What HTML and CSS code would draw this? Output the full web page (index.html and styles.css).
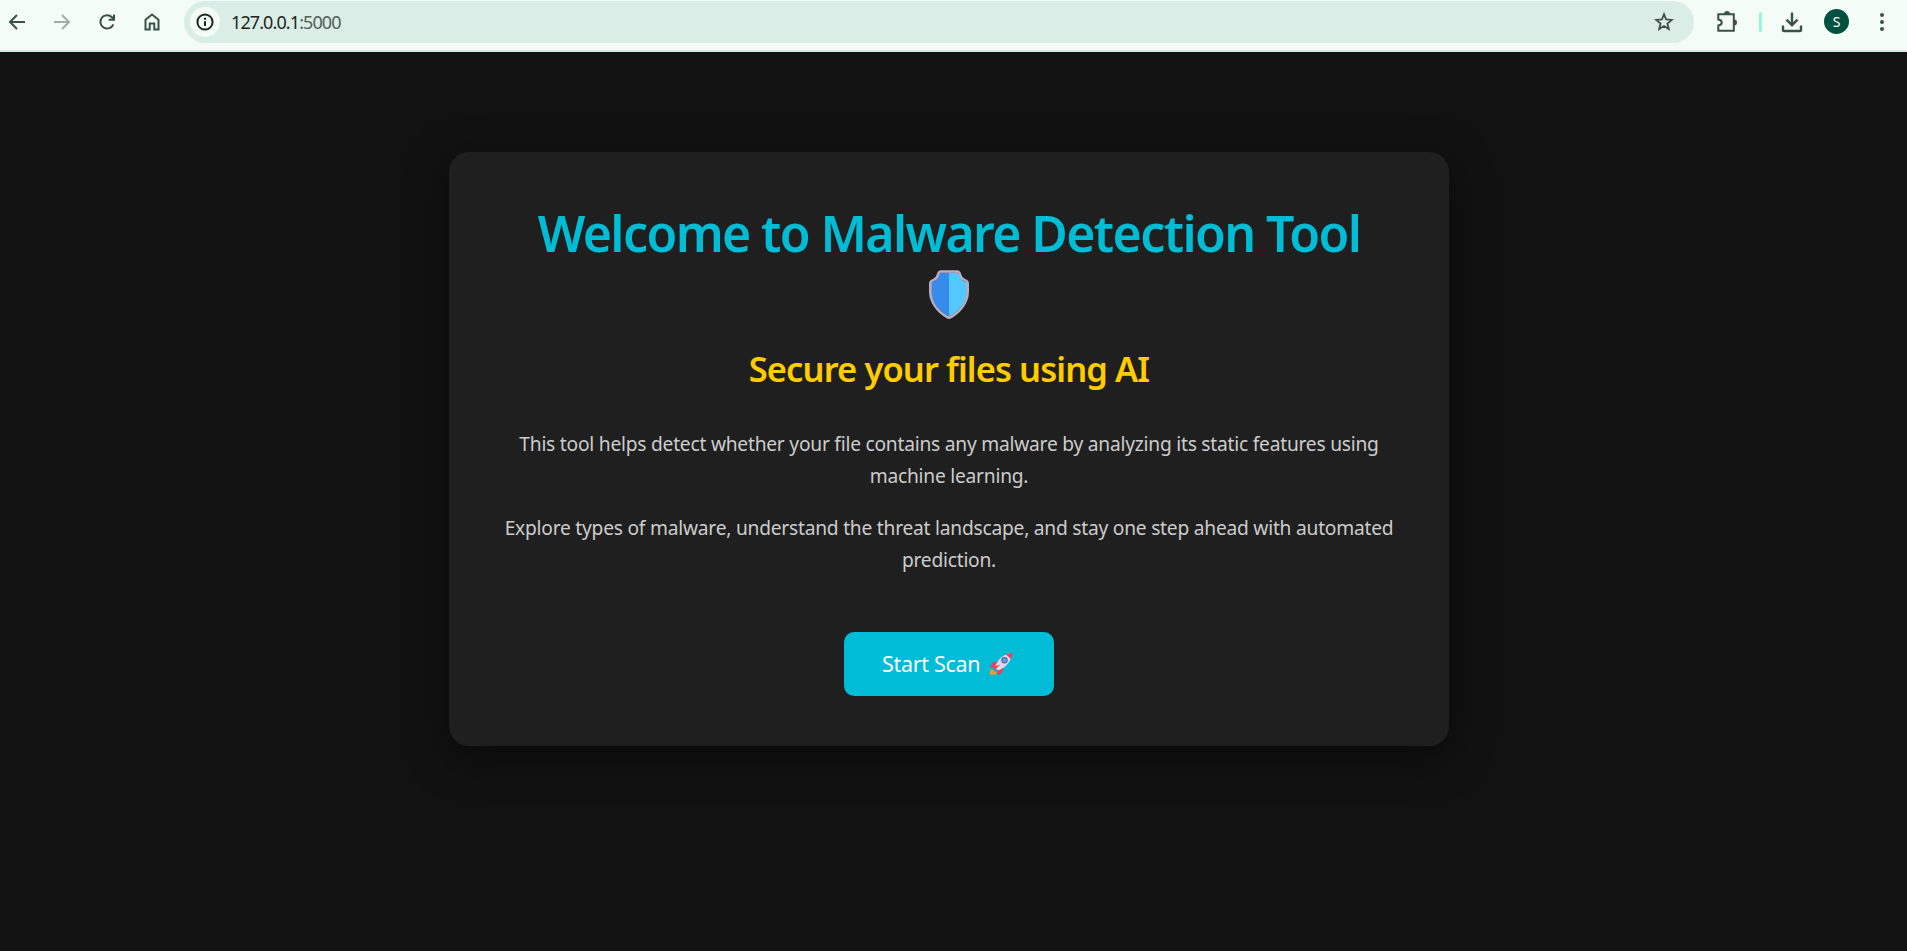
FILE: index.html
```
<!DOCTYPE html>
<html lang="en">
<head>
    <meta charset="UTF-8">
    <title>Malware Detection Tool</title>
    <link rel="stylesheet" href="styles.css">
</head>
<body>
<div class="toolbar">
    <div class="nav">
        <svg class="icon" viewBox="0 0 20 20"><path d="M18 10H3.5M10 3L3 10l7 7"/></svg>
        <svg class="icon off" viewBox="0 0 20 20"><path d="M2 10h14.5M10 3l7 7-7 7"/></svg>
        <svg class="icon" viewBox="0 0 20 20"><path d="M16.3 12.3A6.7 6.7 0 1 1 15 5.3l1.8 2M17 2.5v5.3h-5.3"/></svg>
        <svg class="icon" viewBox="0 0 20 20"><path d="M3.5 17.4V7.8L10 2.5l6.5 5.3v9.6h-4.2v-5.8H7.7v5.8z"/></svg>
    </div>
    <div class="address">
        <span class="info">
            <svg viewBox="0 0 20 20"><circle cx="10" cy="10" r="7.6"/><path d="M10 9.2v4.8M10 5.8v1.9"/></svg>
        </span>
        <span class="url">127.0.0.1<span class="port">:5000</span></span>
        <svg class="star" viewBox="0 0 20 20"><path d="M10 2.2l2.1 5.3 5.7.4-4.4 3.6 1.4 5.6-4.8-3.1-4.8 3.1 1.4-5.6L2.2 7.9l5.7-.4z"/></svg>
    </div>
    <div class="actions">
        <svg class="puzzle" viewBox="0 0 22 22"><path d="M3 3.3h14.8v16.4H2.3v-5.2c4.6-.6 4.6-5.4 0-6V3.3z"/><path class="solid" d="M8 3a3 3 0 0 1 6 0zM18 8.5a3 3 0 0 1 0 6z"/></svg>
        <span class="divider"></span>
        <svg class="download" viewBox="0 0 22 22"><path d="M11 1.5v12M5.5 8.7l5.5 5.5 5.5-5.5M2 14.5v4.2q0 1.3 1.3 1.3h15.4q1.3 0 1.3-1.3v-4.2"/></svg>
        <span class="avatar">S</span>
        <svg class="dots" viewBox="0 0 6 20"><circle cx="3" cy="3" r="2"/><circle cx="3" cy="10" r="2"/><circle cx="3" cy="17" r="2"/></svg>
    </div>
</div>

<div class="page">
    <div class="container">
        <h1>
            <span>Welcome to Malware Detection Tool</span>
            <svg class="shield" viewBox="0 0 42 50">
                <path fill="#378bea" d="M13 3h8v44C11 42 3 33 3 22v-9c4-1 6-3 7-7z"/>
                <path fill="#54c7ff" d="M29 3h-8v44c10-5 18-14 18-25v-9c-4-1-6-3-7-7z"/>
                <path class="rim" d="M13 2h16c2 0 2.5 1 3 3 .8 3.4 3 5 6.3 6.4 1.1.5 1.4 1.3 1.4 2.6v8c0 11-7.5 20-16.5 25.4q-2.2 1.4-4.4 0C9.8 42 2.3 33 2.3 22v-8c0-1.3.3-2.1 1.4-2.6C7 10 9.2 8.4 10 5c.5-2 1-3 3-3z"/>
            </svg>
        </h1>
        <h2>Secure your files using AI</h2>
        <p class="intro">This tool helps detect whether your file contains any malware by analyzing its static features using<br>machine learning.</p>
        <p>Explore types of malware, understand the threat landscape, and stay one step ahead with automated<br>prediction.</p>
        <a class="btn" href="#">
            <span>Start Scan</span>
            <svg class="rocket" viewBox="0 0 24 24">
                <path fill="#ff9a2e" d="M3 17l5 4c-1.5 1.7-4.5 2-7.2 1.8C.5 20.5 1 18 3 17z"/>
                <path fill="#f43b59" d="M9 9.5l-5 .8-3.5 5.5 6-.8zM14.5 15l-.8 5L9 23.5l-.3-6z"/>
                <path fill="#e1d8ec" d="M6 15C8 8 14 2 23 1c-.5 8-6 15-14 17.5z"/>
                <path fill="#f43b59" d="M17 2.5C19 1.5 21 1 23.3.7c0 2.3-.5 4.3-1.5 6.3zM11.5 12.5l-7 6.5 1-4.5z"/>
                <circle cx="15.5" cy="8.3" r="2.6" fill="#5aa4f4" stroke="#56659b" stroke-width="1.2"/>
            </svg>
        </a>
    </div>
</div>
</body>
</html>
```
FILE: styles.css
```
* {
    box-sizing: border-box;
}

body {
    margin: 0;
    height: 951px;
    overflow: hidden;
    background: #121212;
    color: #ccc;
    font-family: 'Segoe UI', 'Noto Sans', sans-serif;
}

svg {
    display: block;
    fill: none;
    stroke: #3a5149;
    stroke-width: 2;
    flex: none;
}

/* browser bar */
.toolbar {
    display: flex;
    height: 52px;
    padding-top: 1px;
    background: #f4fcf8;
    border-bottom: 2px solid #d8e7e1;
}

.nav {
    display: flex;
    align-items: center;
    gap: 25px;
    width: 184px;
    height: 41px;
    padding-left: 7px;
}

.icon {
    width: 20px;
    height: 20px;
}

.off {
    stroke: #a3aca8;
}

.address {
    display: flex;
    align-items: center;
    width: 1510px;
    height: 42px;
    padding: 0 20px 0 6px;
    background: #daede6;
    border-radius: 21px;
}

.info {
    display: flex;
    align-items: center;
    justify-content: center;
    width: 30px;
    height: 30px;
    border-radius: 50%;
    background: #f4fcf8;
}

.info svg {
    width: 20px;
    height: 20px;
    stroke: #1d2421;
}

.url {
    margin-left: 11px;
    font-size: 18px;
    line-height: 40px;
    letter-spacing: -0.9px;
    color: #1d2421;
}

.port {
    color: #52605a;
}

.star {
    width: 20px;
    height: 20px;
    margin-left: auto;
    stroke: #454d4a;
    stroke-width: 1.8;
}

.actions {
    display: flex;
    align-items: center;
    height: 41px;
    padding-left: 22px;
}

.puzzle {
    width: 22px;
    height: 22px;
}

.solid {
    fill: #3a5149;
    stroke: none;
}

.divider {
    width: 3px;
    height: 20px;
    margin-left: 21px;
    background: #9af5dc;
    border-radius: 2px;
}

.download {
    width: 22px;
    height: 22px;
    margin-left: 19px;
    stroke-width: 2.4;
}

.avatar {
    width: 25px;
    height: 25px;
    margin-left: 21px;
    border-radius: 50%;
    background: #00513f;
    color: #fff;
    font-size: 14px;
    line-height: 25px;
    text-align: center;
}

.dots {
    width: 6px;
    height: 20px;
    margin-left: 30px;
    fill: #3a5149;
    stroke: none;
}

/* welcome card */
.page {
    padding: 100px 9px 0 0;
}

.container {
    width: 1000px;
    height: 594px;
    margin: 0 auto;
    padding: 48px 50px 50px;
    background: #1f1f1f;
    border-radius: 20px;
    box-shadow: 0 10px 40px rgba(0, 0, 0, 0.5);
    text-align: center;
}

h1 {
    margin: 0;
    color: #00bcd4;
    font-size: 50px;
    font-weight: 600;
    letter-spacing: -1.6px;
    line-height: 66px;
    white-space: nowrap;
}

.shield {
    width: 42px;
    height: 51px;
    margin: 3px auto 0;
    stroke: none;
}

.rim {
    stroke: #b8adc0;
    stroke-width: 2.6;
}

h2 {
    margin: 26px 0 0;
    color: #fc0;
    font-size: 34.5px;
    font-weight: 600;
    letter-spacing: -0.9px;
    line-height: 46px;
    white-space: nowrap;
}

p {
    margin: 20px -20px 0;
    font-size: 19.2px;
    letter-spacing: -0.23px;
    line-height: 32px;
    white-space: nowrap;
}

.intro {
    margin-top: 36px;
}

.btn {
    display: flex;
    align-items: center;
    width: 210px;
    height: 64px;
    margin: 56px auto 0;
    padding: 0 0 2px 38px;
    background: #00bcd7;
    border-radius: 10px;
    color: #fff;
    font-size: 21.5px;
    letter-spacing: -0.3px;
    text-decoration: none;
    white-space: nowrap;
}

.rocket {
    width: 24px;
    height: 24px;
    margin: 2px 0 0 9px;
    stroke: none;
}
```
